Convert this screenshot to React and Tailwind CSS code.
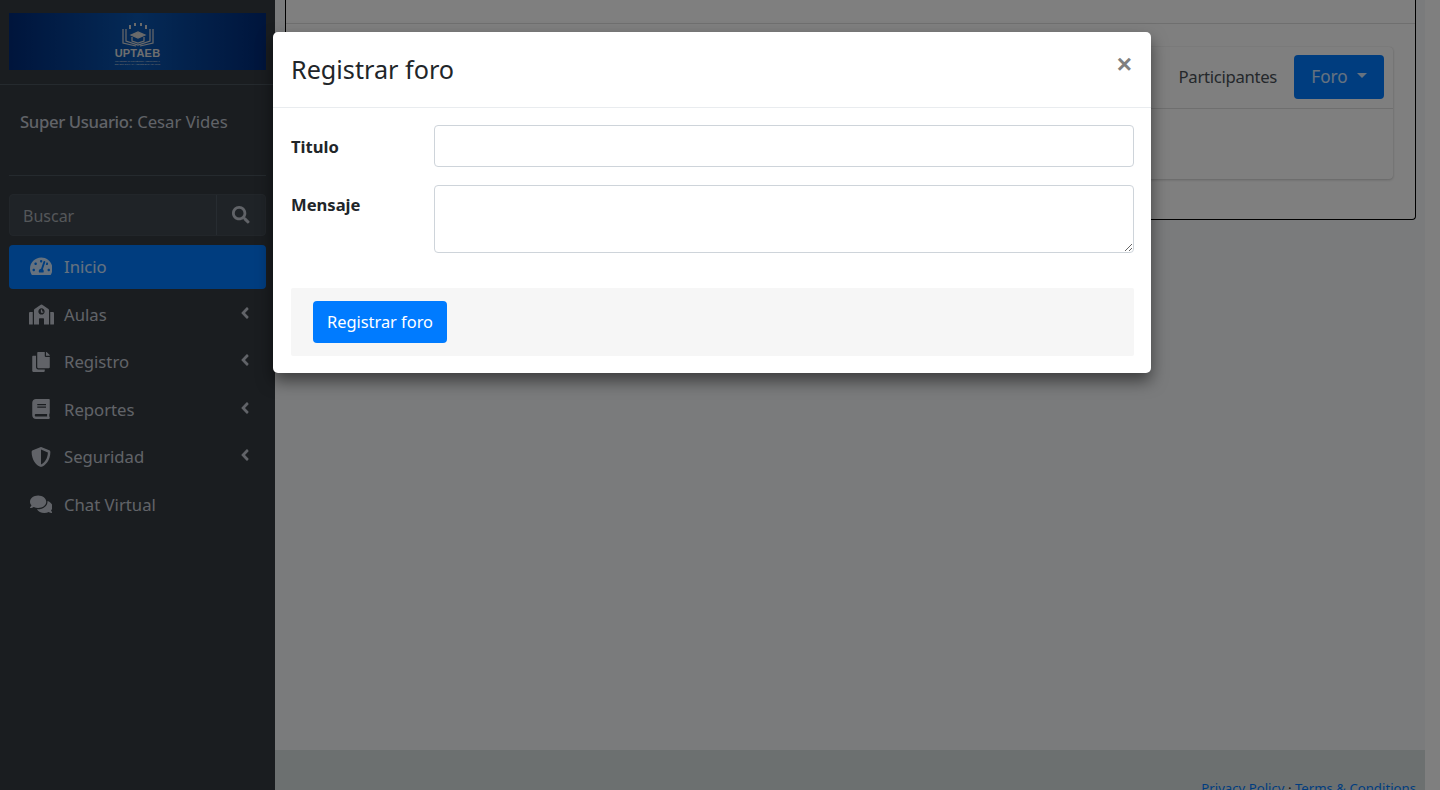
import React from 'react';
import { FaTachometerAlt, FaSchool, FaCopy, FaBook, FaShieldAlt, FaComments, FaAngleLeft, FaSearch } from 'react-icons/fa';

const menu = [
  { label: 'Inicio', icon: FaTachometerAlt, size: 22.5, active: true },
  { label: 'Aulas', icon: FaSchool, size: 25, sub: true },
  { label: 'Registro', icon: FaCopy, size: 20, sub: true },
  { label: 'Reportes', icon: FaBook, size: 20, sub: true },
  { label: 'Seguridad', icon: FaShieldAlt, size: 20, sub: true },
  { label: 'Chat Virtual', icon: FaComments, size: 22.5 },
];

function Logo() {
  return (
    <div className="h-[57px] flex flex-col items-center pt-[10px] bg-[linear-gradient(90deg,#002a78,#0a55ae_50%,#002a78)]">
      <svg width="32" height="24" viewBox="0 0 32 24" fill="none" stroke="#d4d4d4" strokeWidth="1.2">
        <path d="M1 6v14l13 3M31 6v14l-13 3" />
        <path d="M4 6v12l12 4 12-4V6" />
        <path d="M9 12l7-3 7 3-7 3z" fill="#d4d4d4" />
        <path d="M10 14v4l6 2 6-2v-4" />
        <path d="M8 2v4M13 0v3M19 0v3M24 2v4" strokeWidth="2" />
      </svg>
      <span className="font-['Liberation_Sans',sans-serif] font-bold text-[11px] leading-[10px] mt-px text-[#dedede] tracking-[0.2px]">UPTAEB</span>
      <span className="font-['Liberation_Sans',sans-serif] text-[2.2px] leading-[2.5px] mt-[2px] text-[#dedede] whitespace-nowrap">UNIVERSIDAD POLITÉCNICA TERRITORIAL</span>
      <span className="font-['Liberation_Sans',sans-serif] text-[2.2px] leading-[2.5px] text-[#dedede] whitespace-nowrap">DEL ESTADO LARA ANDRÉS ELOY BLANCO</span>
    </div>
  );
}

function Sidebar() {
  return (
    <aside className="w-[275px] shrink-0 h-full bg-[#343a40] text-[#c2c7d0] flex flex-col">
      <div className="px-[9px] pt-[13px] h-[85px] border-b border-[#4b545c]">
        <Logo />
      </div>

      <div className="mx-[9px] h-[91px] border-b border-[#4b545c] pl-[11px] pt-[24px] text-[16.7px] leading-[26px] whitespace-nowrap">
        <span className="font-medium tracking-[-0.35px]">Super Usuario:</span> Cesar Vides
      </div>

      {/* Buscar */}
      <div className="mx-[9px] mt-[18px] h-[42px] flex rounded border border-[#454d55] bg-[#3f474e]">
        <input
          placeholder="Buscar"
          className="flex-1 min-w-0 px-[13px] pt-px bg-transparent outline-none text-[16px] placeholder:text-[#a9aeb4]"
        />
        <div className="w-[49px] border-l border-[#4f5962] flex items-center justify-center">
          <FaSearch className="text-[17.6px]" />
        </div>
      </div>

      <nav className="mx-[9px] mt-[8.7px] flex flex-col gap-[3.5px]">
        {menu.map((item) => {
          const Icon = item.icon;
          return (
            <div
              key={item.label}
              className={`h-[44px] rounded flex items-center text-[16.7px] ${item.active ? 'bg-[#007bff] text-white/[.8]' : ''}`}
            >
              <span className="w-[55px] flex justify-center pl-[9px]">
                <Icon size={item.size} />
              </span>
              <span>{item.label}</span>
              {item.sub && <FaAngleLeft className="ml-auto mr-[12px] mb-[3px] text-[18px]" />}
            </div>
          );
        })}
      </nav>
    </aside>
  );
}

function Page() {
  return (
    <main className="w-[1150px] h-full bg-[#f4f6f9] flex flex-col">
      <div className="flex-1 pl-[10px] pr-[9px]">
        <div className="h-[220px] bg-white border-x border-b border-black rounded-b">
          <div className="h-[24px] border-b border-[#dfdfdf]" />
          <div className="mx-[22px] mt-[23px] h-[132px] rounded bg-white shadow-[0_0_1px_rgba(0,0,0,.125),0_1px_3px_rgba(0,0,0,.2)]">
            <div className="h-[62px] border-b border-[#dfdfdf] flex items-center justify-end pr-[9px] pb-[1px]">
              <span className="text-[#495057] text-[16.7px] tracking-[-0.3px] mr-[17px]">Participantes</span>
              <span className="w-[90px] h-[44px] rounded bg-[#007bff] text-white/[.8] text-[17.2px] flex items-center justify-center gap-[9px]">
                Foro
                <span className="border-x-[5px] border-x-transparent border-t-[5px] border-t-white/[.8] mb-[3px]" />
              </span>
            </div>
          </div>
        </div>
      </div>
      <footer className="h-[40px] shrink-0 bg-[#d8e0e0] pt-[28px] pr-[9px] text-right text-[13.2px] leading-[20px] text-[#212529]">
        <span className="text-[#007bff]">Privacy Policy</span> · <span className="text-[#007bff]">Terms &amp; Conditions</span>
      </footer>
    </main>
  );
}

function Modal() {
  return (
    <div className="absolute left-[273px] top-[32px] w-[878px] h-[341px] bg-white rounded-[5px] shadow-[0_8px_16px_rgba(0,0,0,.5)] text-[#212529] flex flex-col">
      <div className="h-[76px] shrink-0 border-b border-[#e9ecef] flex items-start justify-between px-[18px]">
        <h5 className="text-[25.2px] leading-[36px] mt-[19px]">Registrar foro</h5>
        <button className="text-[26px] leading-[27px] mt-[19px] mr-[1px] font-bold text-[#808080] font-['Liberation_Sans',sans-serif]">×</button>
      </div>

      <div className="pl-[18px] pr-[17px] pt-[17px]">
        <div className="flex h-[42px]">
          <label className="w-[143px] shrink-0 font-bold text-[16.6px] leading-[43px]">Titulo</label>
          <input className="flex-1 h-[42px] rounded border border-[#ced4da] outline-none" />
        </div>
        <div className="flex mt-[18px]">
          <label className="w-[143px] shrink-0 font-bold text-[16.6px] leading-[40px]">Mensaje</label>
          <textarea className="flex-1 h-[68px] rounded border border-[#ced4da] outline-none" />
        </div>
        <div className="mt-[35px] h-[68px] rounded-[2px] bg-[#f6f6f6] pl-[22px] flex items-center">
          <button className="w-[134px] h-[42px] rounded bg-[#007bff] text-white text-[16.4px]">Registrar foro</button>
        </div>
      </div>
    </div>
  );
}

export default function App() {
  return (
    <div className="relative h-[790px] overflow-hidden bg-white flex font-['Noto_Sans',sans-serif]">
      <Sidebar />
      <Page />
      <div className="absolute inset-0 bg-black/50" />
      <Modal />
    </div>
  );
}
